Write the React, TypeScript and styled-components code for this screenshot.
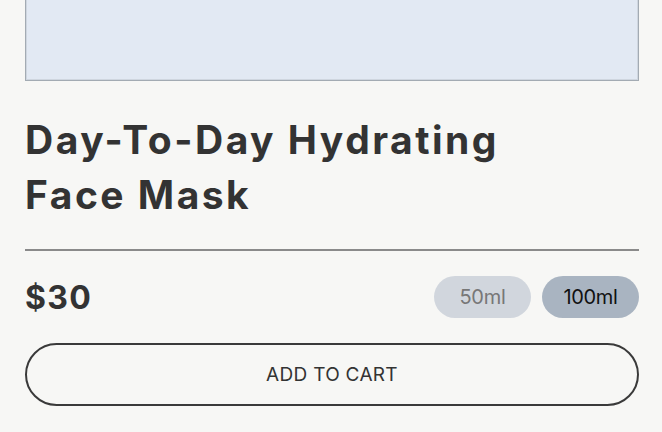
import React, { useState } from "react";
import styled, { createGlobalStyle } from "styled-components";

const Global = createGlobalStyle`
  html, body { margin: 0; padding: 0; background: #f7f7f5; }
  body { font-family: "Inter", "DejaVu Sans", sans-serif; color: #333; }
  * { box-sizing: border-box; }
`;

const Page = styled.div`
  padding: 0 23px 0 25px;
  display: flex;
  flex-direction: column;
`;

const ImageBox = styled.div`
  height: 81px;
  background: #e2e9f3;
  border: 1px solid #a3abb3;
  border-top: none;
  box-shadow: inset 0 -1px 0 #cfd6df, inset 1px 0 0 #cfd6df, inset -1px 0 0 #cfd6df;
`;

const Title = styled.h1`
  margin: 31px 0 0 0;
  font-size: 39px;
  line-height: 55px;
  font-weight: 700;
  letter-spacing: 2.5px;
  color: #333;
`;

const Divider = styled.hr`
  margin: 27px 0 0 0;
  border: none;
  height: 2px;
  background: #8a8a8a;
`;

const PriceRow = styled.div`
  margin-top: 25px;
  display: flex;
  align-items: center;
  justify-content: space-between;
  height: 42px;
`;

const Price = styled.span`
  font-size: 32px;
  font-weight: 700;
  color: #333;
  letter-spacing: 1.3px;
`;

const Sizes = styled.div`
  display: flex;
  gap: 11px;
`;

const Pill = styled.button<{ $active: boolean }>`
  height: 42px;
  min-width: 97px;
  padding: 0 18px;
  border: none;
  border-radius: 21px;
  font-family: "Inter", sans-serif;
  font-size: 20px;
  letter-spacing: -0.3px;
  cursor: pointer;
  background: ${(p) => (p.$active ? "#a9b4c1" : "#d1d6dd")};
  color: ${(p) => (p.$active ? "#111" : "#777")};
`;

const CartButton = styled.button`
  margin-top: 25px;
  height: 63px;
  width: 100%;
  border: 2px solid #3a3a3a;
  border-radius: 32px;
  background: transparent;
  font-family: "Inter", sans-serif;
  font-size: 19px;
  letter-spacing: 0.3px;
  color: #333;
  cursor: pointer;
`;

export default function App() {
  const [size, setSize] = useState("100ml");
  return (
    <>
      <Global />
      <Page>
        <ImageBox />
        <Title>
          Day-To-Day Hydrating
          <br />
          Face Mask
        </Title>
        <Divider />
        <PriceRow>
          <Price>$30</Price>
          <Sizes>
            {["50ml", "100ml"].map((s) => (
              <Pill key={s} $active={size === s} onClick={() => setSize(s)}>
                {s}
              </Pill>
            ))}
          </Sizes>
        </PriceRow>
        <CartButton>ADD TO CART</CartButton>
      </Page>
    </>
  );
}
